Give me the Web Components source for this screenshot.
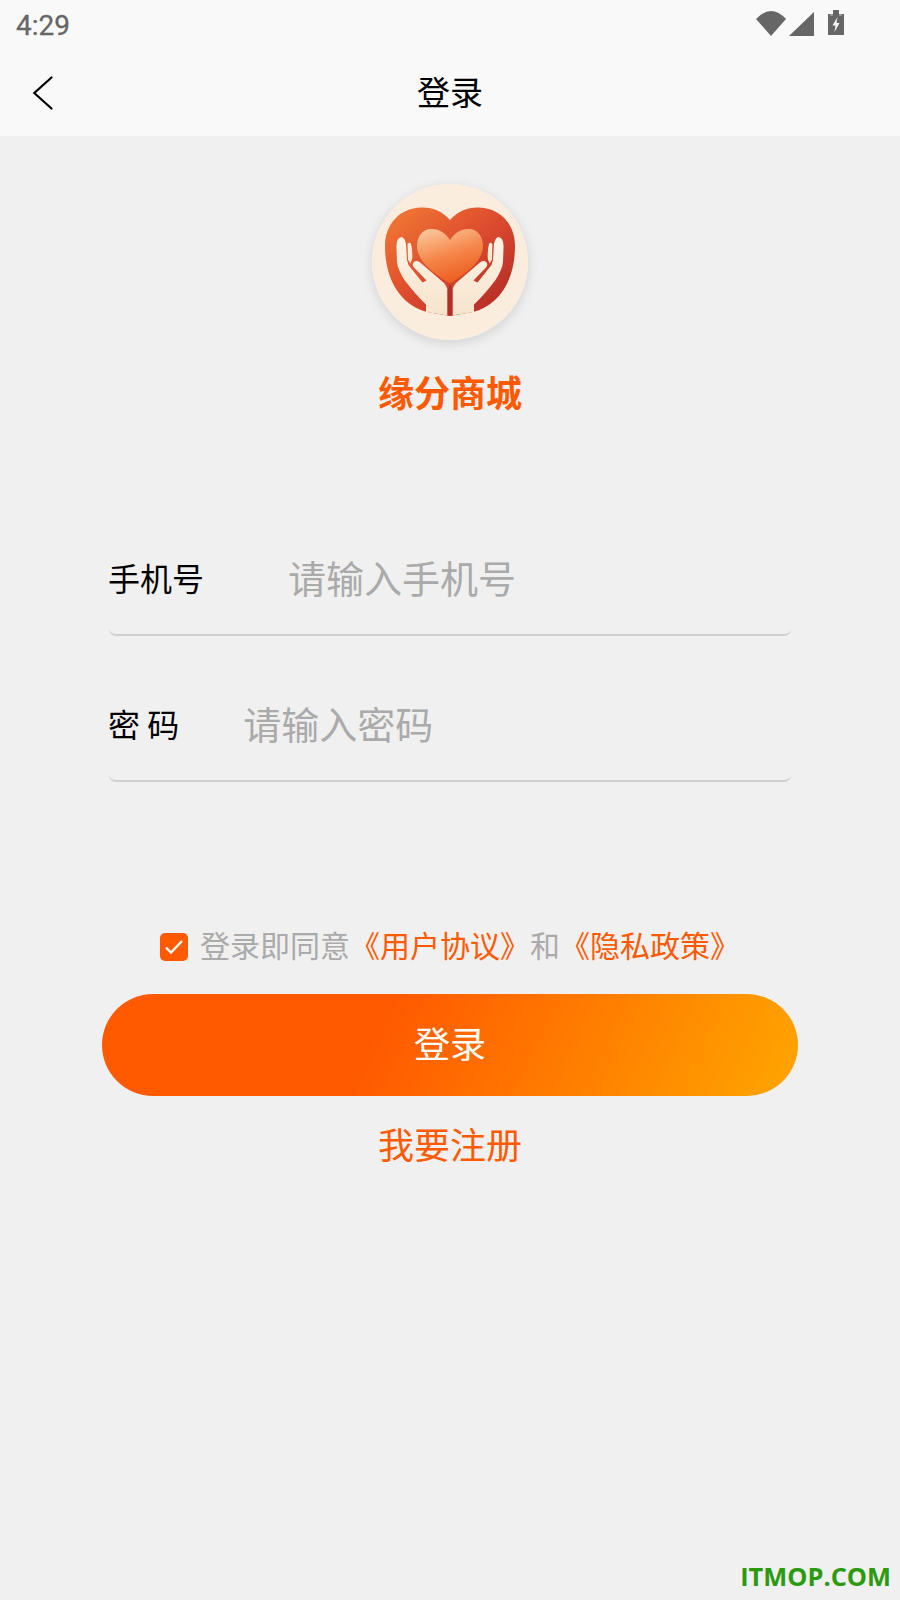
<!DOCTYPE html>
<html lang="zh">
<head>
<meta charset="utf-8">
<title>登录</title>
<style>
  html, body { margin: 0; padding: 0; background: #f0f0f0; }
  body { font-family: "Noto Sans CJK SC", "Liberation Sans", sans-serif; }
</style>
</head>
<body>
<login-page>
  <status-bar time="4:29"></status-bar>
  <nav-bar title="登录"></nav-bar>
  <app-logo name="缘分商城"></app-logo>
  <login-field label="手机号" hint="请输入手机号" gap="84"></login-field>
  <login-field label="密 码" hint="请输入密码" gap="64"></login-field>
  <agree-row></agree-row>
  <grad-button>登录</grad-button>
  <register-link>我要注册</register-link>
</login-page>
<script>
class LoginPage extends HTMLElement {
  constructor() {
    super();
    this.shadow = this.attachShadow({ mode: "open" });
  }
  connectedCallback() {
    this.shadow.innerHTML = `<style>
        :host {
          display: flex;
          flex-direction: column;
          position: relative;
          width: 900px;
          height: 1600px;
          background: #f0f0f0;
          overflow: hidden;
        }
        .mark {
          position: absolute;
          right: 9px;
          bottom: 8px;
          font: bold 25.4px/32px "Open Sans", "Liberation Sans", sans-serif;
          color: #2b9a0e;
        }
      </style>
      <slot></slot>
      <div class="mark">ITMOP.COM</div>`;
  }
}

class StatusBar extends HTMLElement {
  constructor() {
    super();
    this.shadow = this.attachShadow({ mode: "open" });
  }
  connectedCallback() {
    this.shadow.innerHTML = `<style>
        :host {
          display: flex;
          align-items: center;
          justify-content: space-between;
          box-sizing: border-box;
          height: 50px;
          padding: 0 0 0 16px;
          background: #f9f9f9;
        }
        span {
          margin-top: 2px;
          font: 400 28px/50px Roboto, "Liberation Sans", sans-serif;
          -webkit-text-stroke: .3px #666;
          color: #666;
        }
        svg { display: block; margin-right: 50px; }
      </style>
      <span>${this.getAttribute("time")}</span>
      <svg width="94" height="50" viewBox="0 0 94 50">
        <path d="M0 19 Q15 3 30 19 L15 36 Z" fill="#666"/>
        <path d="M33 36 L58 12 V36 Z" fill="#666"/>
        <path d="M72 14 H77 V10 H83 V14 H88 V35 H72 Z" fill="#666"/>
        <path d="M74 14.5 H77 V15.5 H74 Z M83 14.5 H86 V15.5 H83 Z" fill="#c4c4c4"/>
        <path d="M81.5 17 L76.5 25.5 H79.5 L78.5 32 L83.5 23 H80.5 Z" fill="#f9f9f9"/>
      </svg>`;
  }
}

class NavBar extends HTMLElement {
  constructor() {
    super();
    this.shadow = this.attachShadow({ mode: "open" });
  }
  connectedCallback() {
    this.shadow.innerHTML = `<style>
        :host {
          display: grid;
          grid-template-columns: 100px 1fr 100px;
          align-items: center;
          height: 86px;
          background: #f9f9f9;
        }
        svg { display: block; margin-left: 32px; }
        h1 {
          margin: 0 0 4px;
          text-align: center;
          font-weight: 400;
          font-size: 33px;
          line-height: 82px;
          color: #000;
        }
      </style>
      <svg width="24" height="36" viewBox="0 0 24 36">
        <path d="M19.5 2.5 L2.3 18 L19.5 33.5" fill="none" stroke="#000" stroke-width="2.2" stroke-linecap="round"/>
      </svg>
      <h1>${this.getAttribute("title")}</h1>
      <div></div>`;
  }
}

class AppLogo extends HTMLElement {
  constructor() {
    super();
    this.shadow = this.attachShadow({ mode: "open" });
  }
  connectedCallback() {
    this.shadow.innerHTML = `<style>
        :host {
          display: flex;
          flex-direction: column;
          align-items: center;
          padding-top: 48px;
        }
        svg {
          display: block;
          border-radius: 50%;
          box-shadow: 0 3px 12px rgba(0,0,0,.13);
        }
        div {
          margin-top: 26px;
          font-weight: 700;
          font-size: 36px;
          line-height: 50px;
          color: #ff5a00;
        }
      </style>
      <svg width="156" height="156" viewBox="0 0 156 156">
        <defs>
          <linearGradient id="big" x1="0" y1="0" x2="1" y2="1">
            <stop offset="0" stop-color="#f47c34"/>
            <stop offset=".5" stop-color="#dc4a2e"/>
            <stop offset="1" stop-color="#a92526"/>
          </linearGradient>
          <linearGradient id="small" x1=".2" y1="0" x2=".6" y2="1">
            <stop offset="0" stop-color="#fac69a"/>
            <stop offset=".5" stop-color="#f6864a"/>
            <stop offset="1" stop-color="#ec5a1c"/>
          </linearGradient>
          <linearGradient id="skin" x1="0" y1="0" x2="0" y2="1">
            <stop offset="0" stop-color="#fdf3e6"/>
            <stop offset="1" stop-color="#f6e3cc"/>
          </linearGradient>
          <g id="hand">
            <!-- palm with little finger and thumb, the slit between them shows the heart -->
            <path d="M24.4 62 Q24.8 53.2 29.8 53 Q34 54.5 34.2 63 L35 76 L36.5 81 L50.5 98.5 L54.5 96.5 L42.5 84 Q39.5 81 41.5 78.5 Q44 76 47.5 78 L72 99 Q76 103.5 76 110 V131.5 L54 128 V120.5 Q43 110 32.5 96 Q25.5 85 25 78 Z" fill="url(#skin)"/>
            <path d="M35.6 60 Q38 57.5 39 60 Q40.8 67 40.2 75 L38.4 79.5 L36 75.5 Z" fill="url(#skin)"/>
          </g>
        </defs>
        <rect width="156" height="156" fill="#fbeddd"/>
        <path d="M78 36 C70 27 60 23 49 23.5 C28 24 13 40 13 62 C13 100 32 122 55 128 L78 132 L101 128 C124 122 143 100 143 62 C143 40 128 24 107 23.5 C96 23 86 27 78 36 Z" fill="url(#big)"/>
        <path d="M78 56 C73 48 66 45 59 45 C51 45 45 52 45 62 C45 77 62 90 78 99.5 C94 90 111 77 111 62 C111 52 105 45 97 45 C90 45 83 48 78 56 Z" fill="url(#small)"/>
        <use href="#hand"/>
        <use href="#hand" transform="translate(156 0) scale(-1 1)"/>
        <path d="M78 99 L75.3 107 V131.5 H80.7 V107 Z" fill="#b52d25"/>
      </svg>
      <div>${this.getAttribute("name")}</div>`;
  }
}

class LoginField extends HTMLElement {
  constructor() {
    super();
    this.shadow = this.attachShadow({ mode: "open" });
  }
  connectedCallback() {
    this.shadow.innerHTML = `<style>
        :host {
          display: flex;
          align-items: center;
          box-sizing: border-box;
          height: 102px;
          margin: 0 109px 44px;
          padding-bottom: 15px;
          border-bottom: 2px solid #d0d0d0;
          border-radius: 0 0 7px 7px;
          gap: ${this.getAttribute("gap")}px;
        }
        :host(:first-of-type) { margin-top: 118px; }
        .label {
          margin-left: -1px;
          font-size: 32px;
          line-height: 44px;
          color: #000;
          white-space: pre;
        }
        .hint {
          font-size: 38px;
          line-height: 52px;
          color: #aaa;
        }
      </style>
      <div class="label">${this.getAttribute("label")}</div>
      <div class="hint">${this.getAttribute("hint")}</div>`;
  }
}

class AgreeRow extends HTMLElement {
  constructor() {
    super();
    this.shadow = this.attachShadow({ mode: "open" });
  }
  connectedCallback() {
    this.shadow.innerHTML = `<style>
        :host {
          display: flex;
          align-items: center;
          justify-content: center;
          gap: 12px;
          height: 44px;
          margin-top: 99px;
          font-size: 30px;
          line-height: 44px;
          color: #aaa;
          white-space: nowrap;
        }
        .box {
          flex: none;
          width: 28px;
          height: 28px;
          border-radius: 5px;
          background: #ff5a00;
          display: flex;
          align-items: center;
          justify-content: center;
        }
        .text { padding-bottom: 6px; }
        svg { display: block; }
        em { font-style: normal; color: #ff5a00; }
      </style>
      <div class="box">
        <svg width="18" height="14" viewBox="0 0 18 14">
          <path d="M1 7.5 L6 12.5 L17 1" fill="none" stroke="#fff" stroke-width="2.4"/>
        </svg>
      </div>
      <div class="text">登录即同意<em>《用户协议》</em>和<em>《隐私政策》</em></div>`;
  }
}

class GradButton extends HTMLElement {
  constructor() {
    super();
    this.shadow = this.attachShadow({ mode: "open" });
  }
  connectedCallback() {
    this.shadow.innerHTML = `<style>
        :host {
          display: flex;
          align-items: center;
          justify-content: center;
          box-sizing: border-box;
          height: 102px;
          margin: 25px 102px 0;
          padding-bottom: 6px;
          border-radius: 51px;
          background: linear-gradient(115deg, #ff5a00 0%, #ff5a00 40%, #ffa600 100%);
          color: #fff;
          font-size: 36px;
        }
      </style>
      <slot></slot>`;
  }
}

class RegisterLink extends HTMLElement {
  constructor() {
    super();
    this.shadow = this.attachShadow({ mode: "open" });
  }
  connectedCallback() {
    this.shadow.innerHTML = `<style>
        :host {
          display: block;
          margin-top: 22px;
          text-align: center;
          color: #ff5a00;
          font-size: 36px;
          line-height: 50px;
        }
      </style>
      <slot></slot>`;
  }
}

customElements.define("login-page", LoginPage);
customElements.define("status-bar", StatusBar);
customElements.define("nav-bar", NavBar);
customElements.define("app-logo", AppLogo);
customElements.define("login-field", LoginField);
customElements.define("agree-row", AgreeRow);
customElements.define("grad-button", GradButton);
customElements.define("register-link", RegisterLink);
</script>
</body>
</html>
